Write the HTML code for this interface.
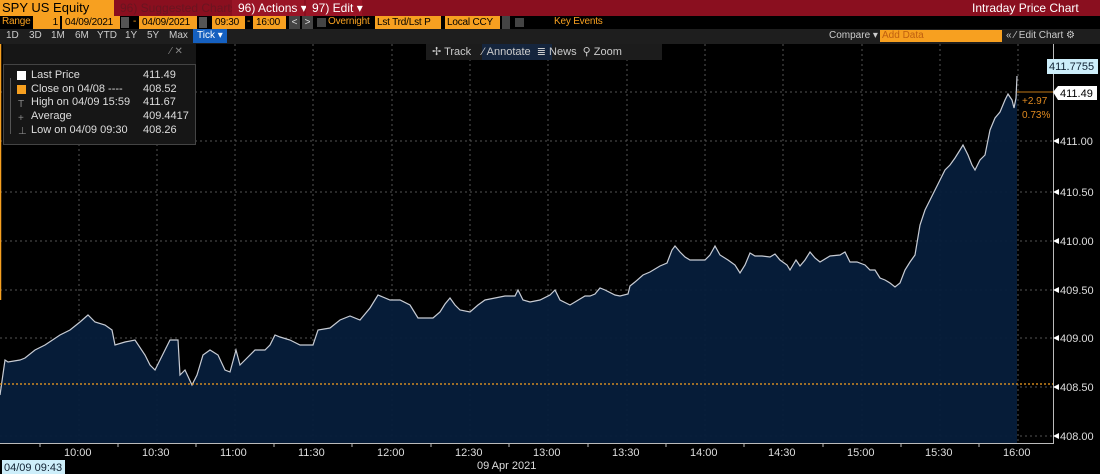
<!DOCTYPE html>
<html><head><meta charset="utf-8"><style>
*{margin:0;padding:0;box-sizing:border-box}
body{width:1100px;height:474px;background:#000;font-family:"Liberation Sans",sans-serif;position:relative;overflow:hidden;color:#ddd}
.a{position:absolute;white-space:nowrap}
.bar1{left:0;top:0;width:1100px;height:16px;background:#8a0f1f}
.ob{background:#f7a020;color:#000}
.t{font-size:10px;line-height:14px;letter-spacing:-0.2px}
</style></head><body>
<div class="a bar1"></div>
<div class="a ob" style="left:0;top:0;width:114px;height:16px;font-size:13px;line-height:16px;padding-left:2px">SPY US Equity</div>
<div class="a" style="left:120px;top:0;font-size:12px;line-height:16px;color:#6a1520">96) Suggested Charts</div>
<div class="a" style="left:232px;top:0;width:72px;height:16px;background:#9a1526"></div>
<div class="a" style="left:238px;top:0;font-size:12px;line-height:16px;color:#fff">96) Actions ▾</div>
<div class="a" style="left:306px;top:0;width:56px;height:16px;background:#9a1526"></div>
<div class="a" style="left:312px;top:0;font-size:12px;line-height:16px;color:#fff">97) Edit ▾</div>
<div class="a" style="left:972px;top:0;font-size:12px;line-height:16px;color:#fff">Intraday Price Chart</div>
<!-- row 2 -->
<div class="a t" style="left:2px;top:15px;color:#f7a020">Range</div>
<div class="a ob t" style="left:33px;top:16px;width:27px;height:13px;text-align:right;padding-right:2px;line-height:13px">1</div>
<div class="a ob t" style="left:62px;top:16px;width:58px;height:13px;padding-left:3px;line-height:13px">04/09/2021</div>
<div class="a" style="left:121px;top:17px;width:8px;height:11px;background:#555"></div>
<div class="a t" style="left:133px;top:15px;color:#f7a020">-</div>
<div class="a ob t" style="left:139px;top:16px;width:58px;height:13px;padding-left:3px;line-height:13px">04/09/2021</div>
<div class="a" style="left:199px;top:17px;width:8px;height:11px;background:#555"></div>
<div class="a ob t" style="left:212px;top:16px;width:33px;height:13px;padding-left:3px;line-height:13px">09:30</div>
<div class="a t" style="left:247px;top:15px;color:#f7a020">-</div>
<div class="a ob t" style="left:253px;top:16px;width:33px;height:13px;padding-left:3px;line-height:13px">16:00</div>
<div class="a t" style="left:289px;top:16px;width:11px;height:13px;background:#444;color:#ddd;text-align:center;line-height:13px">&lt;</div>
<div class="a t" style="left:302px;top:16px;width:11px;height:13px;background:#444;color:#ddd;text-align:center;line-height:13px">&gt;</div>
<div class="a" style="left:317px;top:18px;width:9px;height:9px;background:#444"></div>
<div class="a t" style="left:328px;top:15px;color:#f7a020">Overnight</div>
<div class="a ob t" style="left:375px;top:16px;width:66px;height:13px;padding-left:2px;line-height:13px">Lst Trd/Lst P</div>
<div class="a ob t" style="left:445px;top:16px;width:55px;height:13px;padding-left:2px;line-height:13px">Local CCY</div>
<div class="a" style="left:502px;top:16px;width:8px;height:13px;background:#444"></div>
<div class="a" style="left:515px;top:18px;width:9px;height:9px;background:#444"></div>
<div class="a t" style="left:554px;top:15px;color:#f7a020">Key Events</div>
<!-- row 3 -->
<div class="a" style="left:0;top:29px;width:1100px;height:15px;background:#1e1e1e"></div>
<div class="a" style="left:0;top:29px;font-size:10px;line-height:14px;color:#ccc;word-spacing:0">
<span style="position:absolute;left:6px">1D</span><span style="position:absolute;left:29px">3D</span><span style="position:absolute;left:51px">1M</span><span style="position:absolute;left:75px">6M</span><span style="position:absolute;left:97px">YTD</span><span style="position:absolute;left:125px">1Y</span><span style="position:absolute;left:147px">5Y</span><span style="position:absolute;left:169px">Max</span></div>
<div class="a" style="left:193px;top:29px;width:34px;height:14px;background:#1560c0;color:#fff;font-size:10px;line-height:14px;padding-left:4px">Tick ▾</div>
<div class="a" style="left:829px;top:29px;font-size:10px;line-height:14px;color:#ccc">Compare ▾</div>
<div class="a ob" style="left:880px;top:30px;width:122px;height:12px;font-size:10px;line-height:12px;color:#c06010;padding-left:2px">Add Data</div>
<div class="a" style="left:1006px;top:29px;font-size:10px;line-height:14px;color:#ccc">«  ⁄ Edit Chart  ⚙</div>
<!-- chart -->
<svg class="a" style="left:0;top:44px" width="1100" height="430" viewBox="0 44 1100 430">
<g stroke="#555" stroke-dasharray="2,3" stroke-width="1">
<line x1="0" y1="92" x2="1053" y2="92"/><line x1="0" y1="141" x2="1053" y2="141"/><line x1="0" y1="192" x2="1053" y2="192"/><line x1="0" y1="241" x2="1053" y2="241"/><line x1="0" y1="290" x2="1053" y2="290"/><line x1="0" y1="338" x2="1053" y2="338"/><line x1="0" y1="387" x2="1053" y2="387"/><line x1="0" y1="436" x2="1053" y2="436"/>
<line x1="79" y1="44" x2="79" y2="443"/><line x1="157" y1="44" x2="157" y2="443"/><line x1="235" y1="44" x2="235" y2="443"/><line x1="313" y1="44" x2="313" y2="443"/><line x1="392" y1="44" x2="392" y2="443"/><line x1="470" y1="44" x2="470" y2="443"/><line x1="548" y1="44" x2="548" y2="443"/><line x1="627" y1="44" x2="627" y2="443"/><line x1="705" y1="44" x2="705" y2="443"/><line x1="783" y1="44" x2="783" y2="443"/><line x1="862" y1="44" x2="862" y2="443"/><line x1="940" y1="44" x2="940" y2="443"/><line x1="1018" y1="44" x2="1018" y2="443"/>
</g>
<polygon fill="#061e3b" fill-opacity="0.95" points="0,443 0,395 5,360 8,362 20,360 25,358 35,350 45,345 60,335 70,330 80,322 88,315 95,322 105,325 112,330 115,345 125,342 135,340 145,355 150,365 155,370 160,360 165,350 170,340 178,340 180,375 185,370 192,385 197,375 203,355 210,350 218,355 225,370 230,372 236,350 240,365 245,360 255,350 265,350 270,345 275,335 280,337 290,340 300,345 313,345 318,330 330,328 340,320 350,316 360,320 370,308 378,295 390,300 400,300 410,305 418,318 425,318 433,318 440,312 445,304 450,298 455,305 460,310 470,312 478,305 485,300 495,298 505,296 515,296 518,290 523,300 530,302 540,300 550,295 555,290 560,300 570,305 575,302 585,296 590,296 595,294 600,288 605,290 615,295 620,296 628,294 630,286 635,282 643,275 650,272 660,266 667,263 672,250 675,246 680,252 685,257 690,260 700,260 705,260 710,255 715,246 720,255 728,260 735,265 740,273 745,265 750,253 755,256 762,256 770,257 775,254 780,260 787,265 790,270 796,260 800,266 805,260 810,252 815,258 820,262 830,256 840,255 845,252 850,262 857,262 865,265 870,270 875,270 880,278 885,280 890,283 895,287 900,283 905,270 910,262 915,255 920,225 925,210 930,200 935,190 940,180 945,170 950,165 955,158 960,150 963,145 968,155 972,165 975,170 980,160 985,155 990,130 995,118 1000,112 1005,100 1008,94 1012,100 1014,108 1016,98 1017,92 1017,443"/>
<polyline fill="none" stroke="#c8ccd4" stroke-width="1.2" stroke-linejoin="miter" points="0,395 5,360 8,362 20,360 25,358 35,350 45,345 60,335 70,330 80,322 88,315 95,322 105,325 112,330 115,345 125,342 135,340 145,355 150,365 155,370 160,360 165,350 170,340 178,340 180,375 185,370 192,385 197,375 203,355 210,350 218,355 225,370 230,372 236,350 240,365 245,360 255,350 265,350 270,345 275,335 280,337 290,340 300,345 313,345 318,330 330,328 340,320 350,316 360,320 370,308 378,295 390,300 400,300 410,305 418,318 425,318 433,318 440,312 445,304 450,298 455,305 460,310 470,312 478,305 485,300 495,298 505,296 515,296 518,290 523,300 530,302 540,300 550,295 555,290 560,300 570,305 575,302 585,296 590,296 595,294 600,288 605,290 615,295 620,296 628,294 630,286 635,282 643,275 650,272 660,266 667,263 672,250 675,246 680,252 685,257 690,260 700,260 705,260 710,255 715,246 720,255 728,260 735,265 740,273 745,265 750,253 755,256 762,256 770,257 775,254 780,260 787,265 790,270 796,260 800,266 805,260 810,252 815,258 820,262 830,256 840,255 845,252 850,262 857,262 865,265 870,270 875,270 880,278 885,280 890,283 895,287 900,283 905,270 910,262 915,255 920,225 925,210 930,200 935,190 940,180 945,170 950,165 955,158 960,150 963,145 968,155 972,165 975,170 980,160 985,155 990,130 995,118 1000,112 1005,100 1008,94 1012,100 1014,108 1016,98 1017,76"/>
<line x1="0" y1="384" x2="1053" y2="384" stroke="#f7a020" stroke-dasharray="2,2" stroke-width="1.3"/>
<line x1="1017" y1="92" x2="1053" y2="92" stroke="#c07818" stroke-width="1"/>
<line x1="0.5" y1="44" x2="0.5" y2="300" stroke="#f7a020" stroke-width="1.5"/>
<line x1="0" y1="443.5" x2="1053" y2="443.5" stroke="#bbb"/>
<line x1="1053.5" y1="44" x2="1053.5" y2="444" stroke="#bbb"/>
<g fill="#fff">
<polygon points="1053,141 1059,138 1059,144"/><polygon points="1053,192 1059,189 1059,195"/><polygon points="1053,241 1059,238 1059,244"/><polygon points="1053,290 1059,287 1059,293"/><polygon points="1053,338 1059,335 1059,341"/><polygon points="1053,387 1059,384 1059,390"/><polygon points="1053,436 1059,433 1059,439"/>
</g>
<g fill="#ddd" font-size="11" font-family="Liberation Sans">
<text x="1060" y="145">411.00</text><text x="1060" y="196">410.50</text><text x="1060" y="245">410.00</text><text x="1060" y="294">409.50</text><text x="1060" y="342">409.00</text><text x="1060" y="391">408.50</text><text x="1060" y="440">408.00</text>
<text x="64" y="456">10:00</text><text x="142" y="456">10:30</text><text x="220" y="456">11:00</text><text x="298" y="456">11:30</text><text x="377" y="456">12:00</text><text x="455" y="456">12:30</text><text x="533" y="456">13:00</text><text x="612" y="456">13:30</text><text x="690" y="456">14:00</text><text x="768" y="456">14:30</text><text x="847" y="456">15:00</text><text x="925" y="456">15:30</text><text x="1003" y="456">16:00</text>
<text x="477" y="469">09 Apr 2021</text>
</g>
<g stroke="#bbb"><line x1="40" y1="443" x2="40" y2="447"/><line x1="118" y1="443" x2="118" y2="447"/><line x1="196" y1="443" x2="196" y2="447"/><line x1="274" y1="443" x2="274" y2="447"/><line x1="352" y1="443" x2="352" y2="447"/><line x1="431" y1="443" x2="431" y2="447"/><line x1="509" y1="443" x2="509" y2="447"/><line x1="588" y1="443" x2="588" y2="447"/><line x1="666" y1="443" x2="666" y2="447"/><line x1="744" y1="443" x2="744" y2="447"/><line x1="823" y1="443" x2="823" y2="447"/><line x1="901" y1="443" x2="901" y2="447"/><line x1="979" y1="443" x2="979" y2="447"/></g>
<polygon points="1053,92 1058,86 1097,86 1097,100 1058,100" fill="#fff"/>
<text x="1060" y="97" font-size="11" fill="#000" font-family="Liberation Sans">411.49</text>
<rect x="1047" y="59" width="51" height="15" fill="#cdeefa"/>
<text x="1049" y="70" font-size="11" fill="#123" font-family="Liberation Sans">411.7755</text>
<text x="1022" y="104" font-size="10" fill="#e08a20" font-family="Liberation Sans">+2.97</text>
<text x="1022" y="118" font-size="10" fill="#e08a20" font-family="Liberation Sans">0.73%</text>
<rect x="2" y="460" width="63" height="14" fill="#cdeefa"/>
<text x="4" y="471" font-size="11" fill="#123" font-family="Liberation Sans">04/09 09:43</text>
</svg>
<!-- chart toolbar -->
<div class="a" style="left:426px;top:44px;width:236px;height:16px;background:#1c1c1c"></div>
<div class="a" style="left:482px;top:44px;width:70px;height:16px;background:#15253d"></div>
<div class="a" style="left:432px;top:44px;font-size:11px;line-height:16px;color:#ccc">✢ Track &nbsp; <span style="margin-left:2px">⁄ Annotate</span> &nbsp;≣ News &nbsp;⚲ Zoom</div>
<!-- legend -->
<div class="a" style="left:3px;top:64px;width:193px;height:81px;background:#161616;border:1px solid #444"></div>
<div class="a" style="left:3px;top:44px;width:193px;height:20px;background:#161616"></div>
<div class="a" style="left:170px;top:46px;font-size:10px;color:#888">⁄ ✕</div>
<div class="a" style="left:17px;top:71px;width:9px;height:9px;background:#fff"></div>
<div class="a" style="left:17px;top:85px;width:9px;height:9px;background:#f7a020"></div>
<div class="a" style="left:10px;top:78px;width:1px;height:56px;background:#555"></div>
<div class="a" style="left:31px;top:69px;font-size:11px;line-height:13.7px;color:#ddd">Last Price<br>Close on 04/08 ----<br>High on 04/09 15:59<br>Average<br>Low on 04/09 09:30</div>
<div class="a" style="left:143px;top:69px;font-size:11px;line-height:13.7px;color:#ddd">411.49<br>408.52<br>411.67<br>409.4417<br>408.26</div>
<div class="a" style="left:18px;top:98px;font-size:10px;color:#888;line-height:13.7px">T<br>+<br>⊥</div>
</body></html>
